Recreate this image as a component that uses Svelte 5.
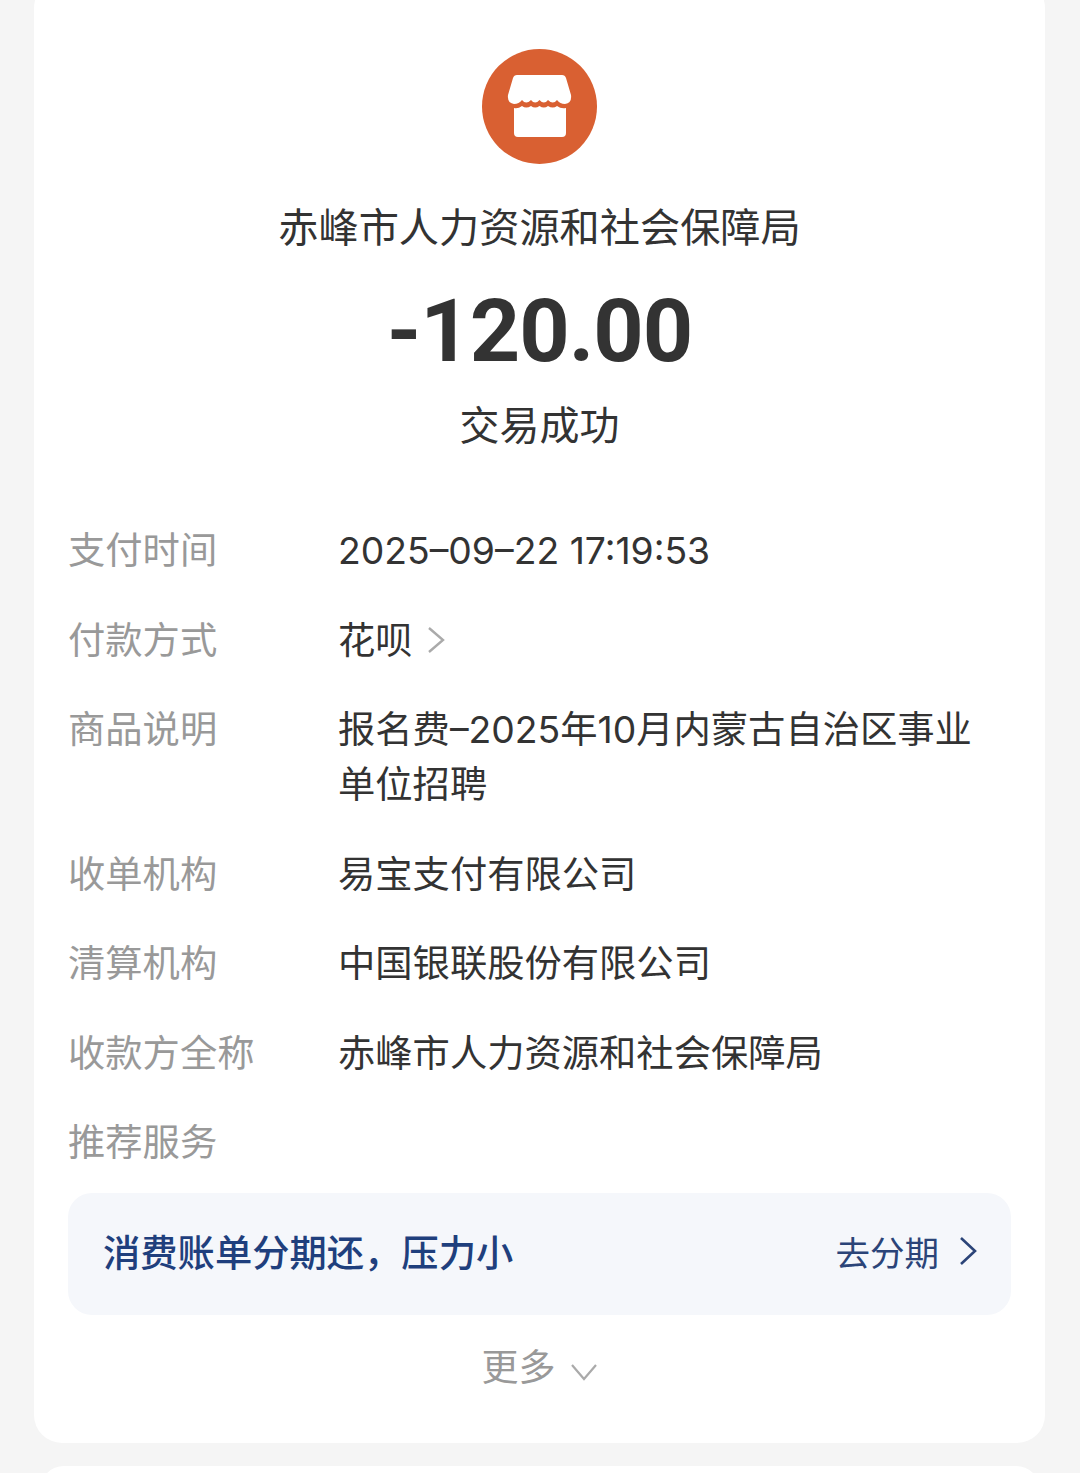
<script>
	const rows = [
		{ label: "支付时间", value: "2025–09–22 17:19:53" },
		{ label: "付款方式", value: "花呗", arrow: true },
		{ label: "商品说明", value: "报名费–2025年10月内蒙古自治区事业单位招聘" },
		{ label: "收单机构", value: "易宝支付有限公司" },
		{ label: "清算机构", value: "中国银联股份有限公司" },
		{ label: "收款方全称", value: "赤峰市人力资源和社会保障局" },
		{ label: "推荐服务", value: "" }
	];
</script>

<div class="page">
	<div class="card">
		<div class="logo">
			<svg width="115" height="115" viewBox="0 0 115 115" xmlns="http://www.w3.org/2000/svg">
				<circle cx="57.5" cy="57.5" r="57.5" fill="#d96032" />
				<path
					d="M35 26H80Q83 26 84 29L89 46Q90 54 83 55Q78 55 75 51Q71 56 66 51Q62 56 57.5 51Q53 56 49 51Q44 56 40 51Q37 55 32 55Q25 54 26 46L31 29Q32 26 35 26Z"
					fill="#fff"
				/>
				<path
					d="M32 59Q36 60 40 57Q44 60 49 57Q53 60 57.5 57Q62 60 66 57Q71 60 75 57Q79 60 84 59V84Q84 88 80 88H36Q32 88 32 84Z"
					fill="#fff"
				/>
			</svg>
		</div>
		<div class="merchant">赤峰市人力资源和社会保障局</div>
		<div class="amount">-120.00</div>
		<div class="status">交易成功</div>

		<div class="rows">
			{#each rows as row}
				<div class="row">
					<div class="label">{row.label}</div>
					<div class="value">
						{row.value}
						{#if row.arrow}
							<svg class="arrow" width="18" height="28" viewBox="0 0 18 28">
								<path d="M2 2L16 14L2 26" fill="none" stroke="#aaa" stroke-width="2.4" />
							</svg>
						{/if}
					</div>
				</div>
			{/each}
		</div>

		<div class="banner">
			<span class="banner-title">消费账单分期还，压力小</span>
			<span class="banner-action">
				去分期
				<svg width="18" height="30" viewBox="0 0 18 30">
					<path d="M2 2L16 15L2 28" fill="none" stroke="#2b4478" stroke-width="2.6" />
				</svg>
			</span>
		</div>

		<div class="more">
			更多
			<svg width="28" height="18" viewBox="0 0 28 18">
				<path d="M2 2L14 16L26 2" fill="none" stroke="#aaa" stroke-width="2.2" />
			</svg>
		</div>
	</div>
	<div class="card-next"></div>
</div>

<style>
	:global(body) {
		margin: 0;
		background: #f5f5f5;
	}

	.page {
		height: 1473px;
		overflow: hidden;
		font-family: Inter, "Noto Sans CJK SC", "Liberation Sans", sans-serif;
	}

	.card {
		margin: -20px 35px 0 34px;
		padding: 69px 34px 0;
		height: 1394px;
		background: #fff;
		border-radius: 28px;
		display: flex;
		flex-direction: column;
	}

	.logo {
		display: flex;
		justify-content: center;
		height: 115px;
	}

	.merchant {
		margin-top: 36px;
		height: 56px;
		line-height: 56px;
		text-align: center;
		font-size: 40.2px;
		color: #333;
	}

	.amount {
		margin-top: 30px;
		height: 90px;
		line-height: 90px;
		text-align: center;
		font-family: Roboto, "Liberation Sans", sans-serif;
		font-size: 88px;
		font-weight: 700;
		letter-spacing: -1px;
		color: #333;
	}

	.status {
		margin-top: 22px;
		height: 56px;
		line-height: 56px;
		text-align: center;
		font-size: 40px;
		color: #333;
	}

	.rows {
		margin-top: 69px;
		display: flex;
		flex-direction: column;
		gap: 34.5px;
	}

	.row {
		display: grid;
		grid-template-columns: 270px 1fr;
		font-size: 37.3px;
		line-height: 55px;
	}

	.label {
		color: #999;
	}

	.value {
		color: #333;
		display: flex;
		flex-wrap: wrap;
		align-items: center;
		gap: 14px;
		width: 640px;
	}

	.banner {
		margin-top: 23px;
		height: 122px;
		padding: 0 34px 6px 35px;
		box-sizing: border-box;
		background: #f5f7fb;
		border-radius: 24px;
		display: flex;
		align-items: center;
		justify-content: space-between;
	}

	.banner-title {
		font-size: 37.3px;
		font-weight: 500;
		color: #1f3f7d;
	}

	.banner-action {
		display: flex;
		align-items: center;
		gap: 20px;
		font-size: 34.5px;
		color: #2b4478;
	}

	.more {
		margin-top: 22px;
		display: flex;
		justify-content: center;
		align-items: center;
		gap: 14px;
		font-size: 37px;
		line-height: 62px;
		color: #999;
	}

	.more svg {
		margin-top: 8px;
	}

	.card-next {
		margin: 23px 40px 0;
		height: 60px;
		background: #fff;
		border-radius: 24px;
	}
</style>
